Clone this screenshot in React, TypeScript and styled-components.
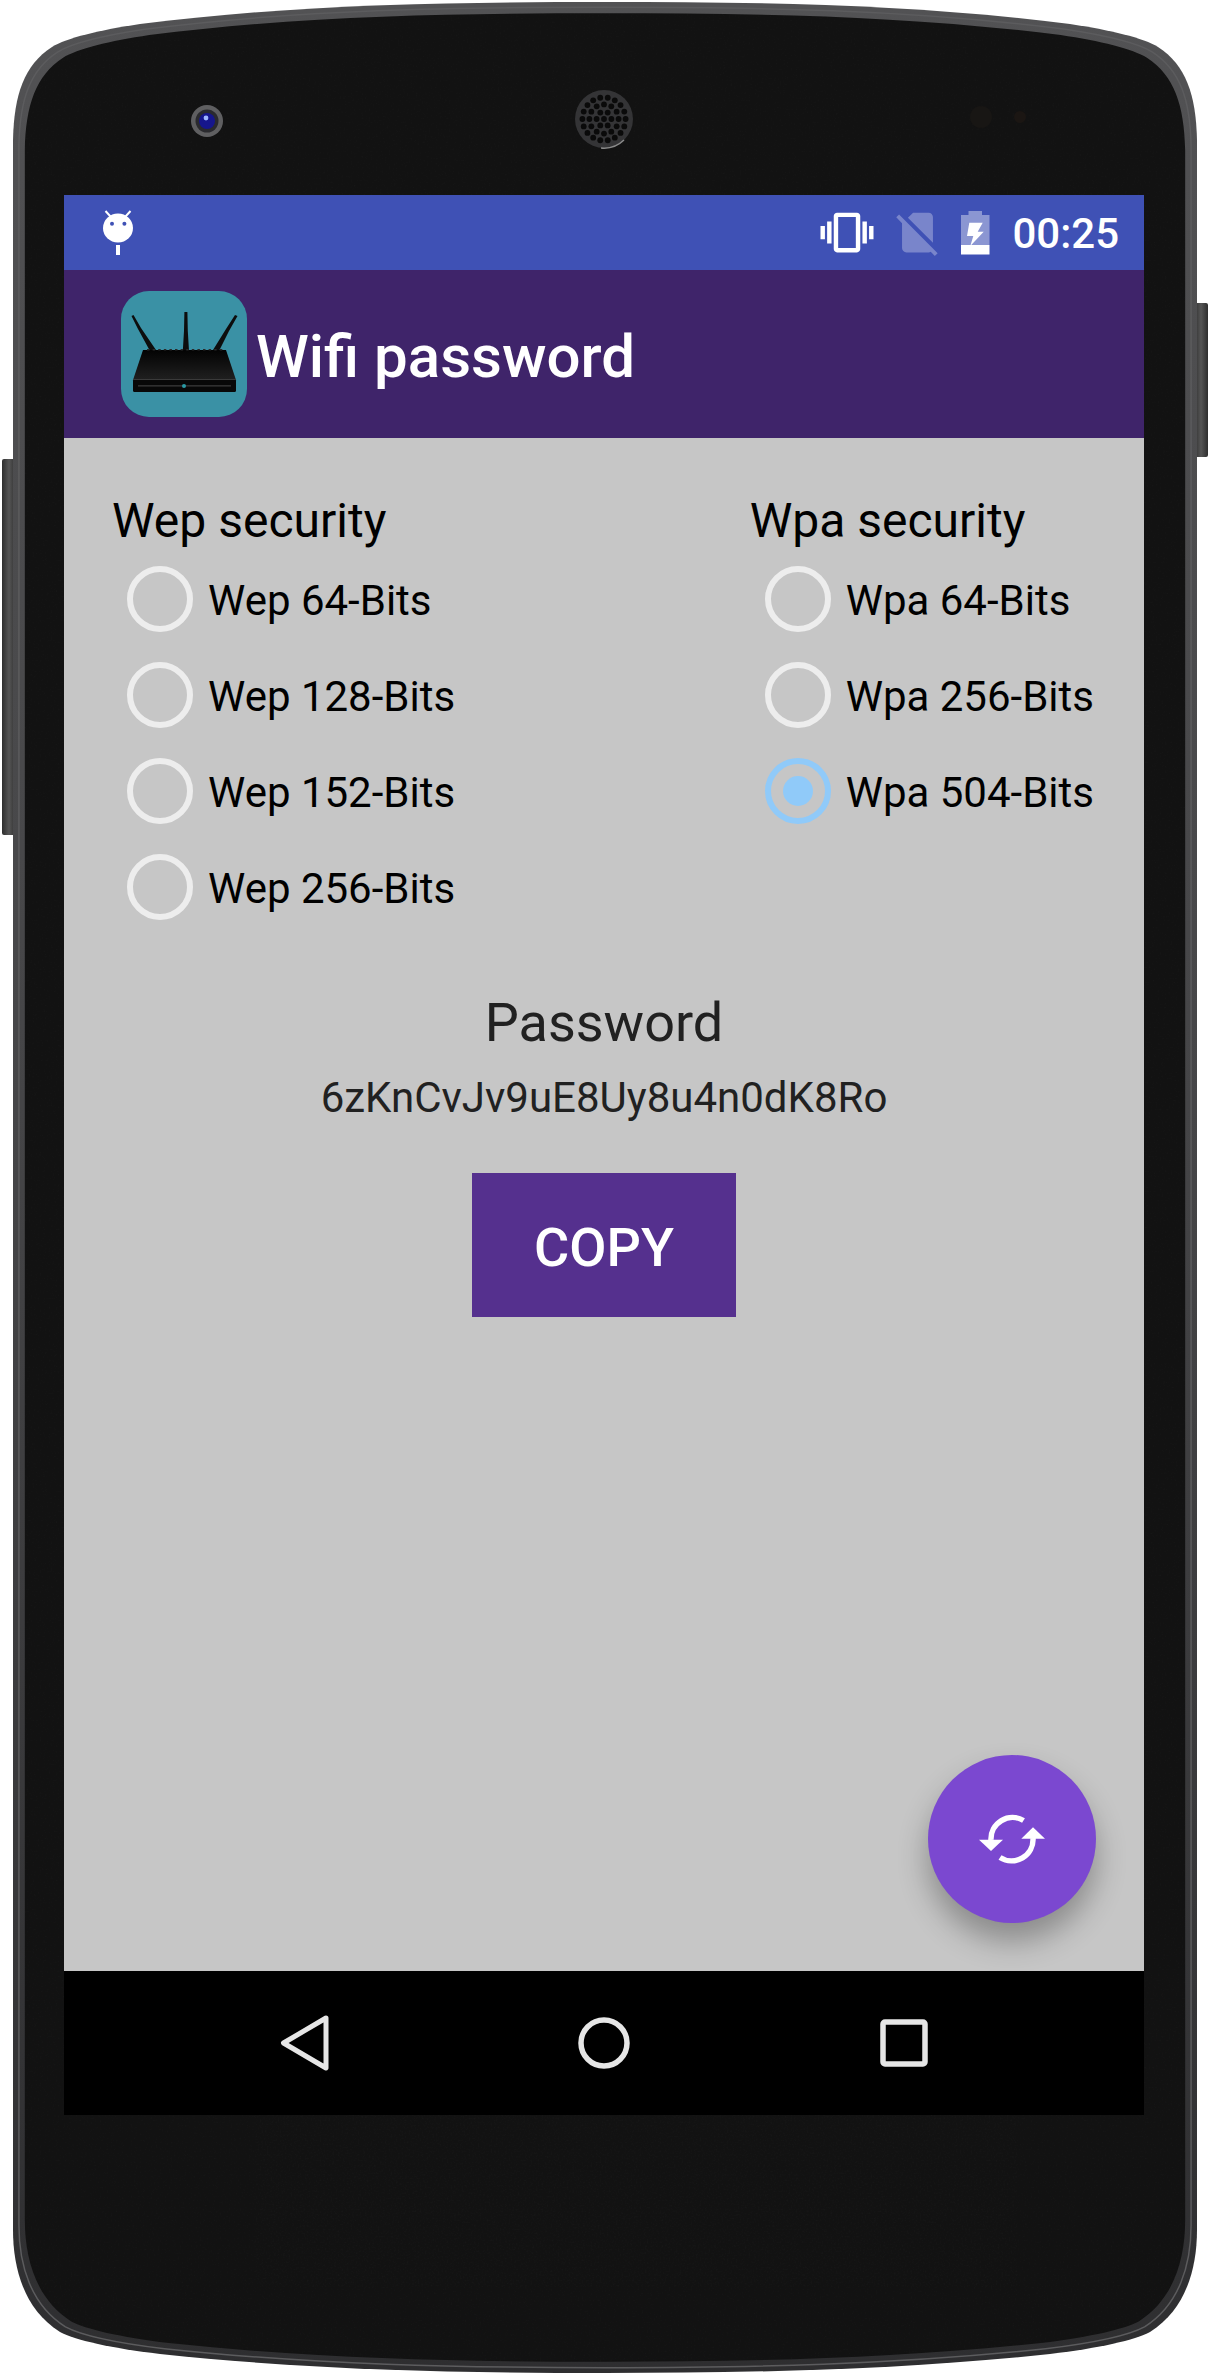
import React from "react";
import styled, { createGlobalStyle } from "styled-components";

const GlobalStyle = createGlobalStyle`
  html, body {
    margin: 0;
    padding: 0;
    background: #ffffff;
    font-family: Roboto, "Liberation Sans", sans-serif;
  }
`;

const Device = styled.div`
  position: relative;
  box-sizing: border-box;
  width: 1210px;
  height: 2375px;
  padding: 195px 66px 260px 64px;
`;

const FrameArt = styled.svg`
  position: absolute;
  top: 0;
  left: 0;
  width: 1210px;
  height: 2375px;
`;

const Screen = styled.div`
  position: relative;
  display: flex;
  flex-direction: column;
  width: 1080px;
  height: 1920px;
`;

const StatusBar = styled.div`
  display: flex;
  align-items: center;
  flex: none;
  height: 75px;
  padding: 0 25px 0 39px;
  background: #3f51b5;
  color: #ffffff;
`;

const StatusIcons = styled.div`
  display: flex;
  align-items: center;
  gap: 17px;
  margin-left: auto;
`;

const Clock = styled.span`
  margin-left: 5px;
  padding-top: 3px;
  font-size: 42px;
  font-weight: 500;
  line-height: 1;
`;

const AppBar = styled.div`
  display: flex;
  align-items: center;
  flex: none;
  height: 168px;
  padding-left: 57px;
  background: #3f246a;
`;

const AppIcon = styled.div`
  display: flex;
  width: 126px;
  height: 126px;
  border-radius: 28px;
  background: #3a91a5;
`;

const AppTitle = styled.h1`
  margin: 0 0 0 9px;
  padding-top: 6px;
  color: #ffffff;
  font-size: 60px;
  font-weight: 500;
  line-height: 1;
`;

const Content = styled.main`
  position: relative;
  flex: 1;
  padding-top: 54px;
  background: #c6c6c6;
`;

const SecurityGroups = styled.div`
  display: flex;
  justify-content: space-between;
  padding: 0 50px 0 48px;
`;

const GroupTitle = styled.div`
  height: 59px;
  color: #000000;
  font-size: 48px;
  line-height: 57px;
`;

const RadioRow = styled.div`
  display: flex;
  align-items: center;
  height: 96px;
  padding-left: 15px;
`;

const RadioRing = styled.span<{ $checked?: boolean }>`
  display: flex;
  align-items: center;
  justify-content: center;
  box-sizing: border-box;
  width: 66px;
  height: 66px;
  border: 6px solid ${(props) => (props.$checked ? "#90caf9" : "#ededed")};
  border-radius: 50%;
`;

const RadioDot = styled.span`
  width: 30px;
  height: 30px;
  border-radius: 50%;
  background: #90caf9;
`;

const RadioLabel = styled.span`
  margin-left: 15px;
  padding-top: 4px;
  color: #000000;
  font-size: 42px;
  line-height: 1;
  white-space: nowrap;
`;

const PasswordBlock = styled.div`
  display: flex;
  flex-direction: column;
  align-items: center;
  margin-top: 56px;
`;

const PasswordTitle = styled.div`
  color: #212121;
  font-size: 54px;
  line-height: 64px;
`;

const PasswordValue = styled.div`
  margin-top: 18px;
  color: #212121;
  font-size: 42px;
  line-height: 50px;
`;

const CopyButton = styled.button`
  width: 264px;
  height: 144px;
  margin-top: 50px;
  padding: 4px 0 0;
  border: 0;
  border-radius: 0;
  background: #55308e;
  color: #ffffff;
  font-family: inherit;
  font-size: 54px;
  font-weight: 500;
`;

const Fab = styled.button`
  position: absolute;
  right: 48px;
  bottom: 48px;
  display: flex;
  align-items: center;
  justify-content: center;
  width: 168px;
  height: 168px;
  padding: 0;
  border: 0;
  border-radius: 50%;
  background: #7b48d0;
  box-shadow: 0 18px 30px rgba(0, 0, 0, 0.3);
`;

const NavBar = styled.nav`
  display: flex;
  justify-content: center;
  flex: none;
  height: 144px;
  background: #000000;
`;

const NavButton = styled.div`
  display: flex;
  align-items: center;
  justify-content: center;
  width: 300px;
`;

const SpeakerHoles = () => {
  const holes: [number, number][] = [[0, 0]];
  [[7.4, 6], [14.6, 12], [21.6, 18]].forEach(([radius, count]) => {
    for (let i = 0; i < count; i++) {
      const angle = (i / count) * Math.PI * 2;
      holes.push([radius * Math.cos(angle), radius * Math.sin(angle)]);
    }
  });
  return (
    <g transform="translate(604 119)">
      <circle r="29" fill="#343436" />
      <path d="M 20 21 A 29 29 0 0 1 -3 29" fill="none" stroke="#8a8a8a" strokeWidth="1.5" />
      {holes.map(([x, y], i) => (
        <circle key={i} cx={x} cy={y} r="2.9" fill="#0a0a0a" />
      ))}
    </g>
  );
};

const BODY_PATH =
  "M13 140 C14 95 24 65 52 47 C66 38 100 30 140 24 C300 4 450 2 605 2 C760 2 910 4 1070 24 C1110 30 1144 38 1158 47 C1186 65 1196 95 1197 140 L1197 2230 C1197 2270 1185 2310 1150 2332 C1135 2340 1100 2348 1050 2354 C900 2370 750 2373 605 2373 C460 2373 310 2370 160 2354 C110 2348 75 2340 60 2332 C25 2310 13 2270 13 2230 Z";

const PhoneFrame = () => (
  <FrameArt viewBox="0 0 1210 2375" aria-hidden="true">
    <defs>
      <linearGradient id="rim" x1="0" y1="0" x2="0" y2="1">
        <stop offset="0" stopColor="#525254" />
        <stop offset="0.5" stopColor="#444446" />
        <stop offset="1" stopColor="#2e2e30" />
      </linearGradient>
      <linearGradient id="rocker" x1="0" y1="0" x2="1" y2="0">
        <stop offset="0" stopColor="#2e2e2e" />
        <stop offset="0.5" stopColor="#555555" />
        <stop offset="1" stopColor="#2e2e2e" />
      </linearGradient>
      <filter id="grain" x="0" y="0" width="100%" height="100%">
        <feTurbulence type="fractalNoise" baseFrequency="0.55" numOctaves="2" seed="4" />
        <feColorMatrix values="0 0 0 0 1  0 0 0 0 1  0 0 0 0 1  0.9 0 0 0 -0.42" />
      </filter>
      <clipPath id="inner">
        <path d={BODY_PATH} transform="translate(605 1187.5) scale(0.98 0.9905) translate(-605 -1187.5)" />
      </clipPath>
    </defs>
    <rect x="2" y="459" width="14" height="376" rx="2" fill="url(#rocker)" />
    <rect x="1194" y="303" width="14" height="154" rx="2" fill="url(#rocker)" />
    <path d={BODY_PATH} fill="url(#rim)" />
    <path
      d={BODY_PATH}
      transform="translate(605 1187.5) scale(0.99 0.9955) translate(-605 -1187.5)"
      fill="none"
      stroke="#5c5c5e"
      strokeWidth="1.5"
    />
    <path
      d={BODY_PATH}
      transform="translate(605 1187.5) scale(0.98 0.9905) translate(-605 -1187.5)"
      fill="#121212"
    />
    <g clipPath="url(#inner)">
      <rect x="0" y="0" width="1210" height="2375" filter="url(#grain)" opacity="0.05" />
    </g>

    <g transform="translate(207 121)">
      <circle r="16" fill="#5f5f61" />
      <circle r="11.5" fill="#2a2a2e" />
      <circle r="8" fill="#16168c" />
      <circle cx="-1" cy="-3" r="2.4" fill="#9fb6ff" />
    </g>
    <SpeakerHoles />
    <circle cx="981" cy="117" r="11" fill="#181614" />
    <circle cx="1020" cy="117" r="6" fill="#1b1613" />
  </FrameArt>
);

const NotificationIcon = () => (
  <svg width="30" height="45" viewBox="0 0 30 45" fill="#ffffff">
    <ellipse cx="15" cy="18" rx="15" ry="14.6" />
    <path d="M2.5 1 L7.5 6.5 M27.5 1 L22.5 6.5" stroke="#ffffff" strokeWidth="2" />
    <circle cx="9" cy="13.7" r="2" fill="#3f51b5" />
    <circle cx="21.4" cy="13.7" r="2" fill="#3f51b5" />
    <rect x="13" y="35" width="4" height="10" />
  </svg>
);

const VibrateIcon = () => (
  <svg width="54" height="53" viewBox="0 0 24 24" fill="#ffffff">
    <path d="M0 15h2V9H0v6zm3 2h2V7H3v10zm19-8v6h2V9h-2zm-3 8h2V7h-2v10zM16.5 3h-9C6.67 3 6 3.67 6 4.5v15c0 .83.67 1.5 1.5 1.5h9c.83 0 1.5-.67 1.5-1.5v-15c0-.83-.67-1.5-1.5-1.5zM16 19H8V5h8v14z" />
  </svg>
);

const NoSimIcon = () => (
  <svg width="53" height="53" viewBox="0 0 24 24" fill="#ffffff" fillOpacity="0.3">
    <path d="M18.99 5c0-1.1-.89-2-1.99-2h-7L7.66 5.34 19 16.68 18.99 5zM3.65 3.88L2.38 5.15 5 7.77V19c0 1.1.9 2 2 2h10.01c.35 0 .67-.1.96-.26l1.88 1.88 1.27-1.27L3.65 3.88z" />
  </svg>
);

const BatteryIcon = () => (
  <svg width="29" height="44" viewBox="0 0 29 44" fill="#ffffff">
    <path d="M7.5 0 H21 V4 H28.5 V34 H0 V4 H7.5 Z" fillOpacity="0.4" />
    <rect x="0" y="34" width="28.5" height="9.5" />
    <polygon points="8.3,11.7 21.7,11.7 16.7,20.7 22.7,20.7 9.3,35 12.3,25 6,25" />
  </svg>
);

const RouterIcon = () => (
  <svg width="126" height="126" viewBox="0 0 126 126">
    <defs>
      <linearGradient id="routerTop" x1="0" y1="0" x2="0" y2="1">
        <stop offset="0" stopColor="#030303" />
        <stop offset="1" stopColor="#202020" />
      </linearGradient>
    </defs>
    <polygon points="10.5,25 12.5,24 20,37 35,59 29,60 17,38" fill="#0d0d0d" />
    <polygon points="63.4,21 66.4,21 66.8,40 68,60 61.8,60 63,40" fill="#0d0d0d" />
    <polygon points="114,24 116.5,25 108,40 98,60 92,59 105,38" fill="#0d0d0d" />
    <polygon points="22,59 105,59 115,89 12,89" fill="url(#routerTop)" />
    {[...Array(14)].map((_, i) => (
      <rect key={i} x={26 + i * 5.6} y="58" width="2.5" height="1.5" fill="#2a2a2a" />
    ))}
    <rect x="12" y="88" width="103" height="13" rx="1.5" fill="#080808" />
    <rect x="12" y="88" width="103" height="1" fill="#3a3a3a" />
    <rect x="17" y="94.4" width="93" height="1" fill="#4a4a4a" />
    <circle cx="63" cy="95" r="2" fill="#2a9aa5" />
  </svg>
);

const SyncIcon = () => (
  <svg width="66" height="50" viewBox="-33 -25 66 50" fill="#ffffff">
    <path d="M11.5 -18.5 A21.5 21.5 0 0 0 -21 1 M-12 18.5 A21.5 21.5 0 0 0 21 -1" fill="none" stroke="#ffffff" strokeWidth="5.5" />
    <polygon points="-33,0.7 -9,0.7 -21,12" />
    <polygon points="9.3,-0.3 33,-0.3 21,-11.7" />
  </svg>
);

const NavBackIcon = () => (
  <svg width="49" height="56" viewBox="0 0 49 56" fill="none" stroke="#e6e6e6" strokeWidth="5" strokeLinejoin="round">
    <path d="M46 3 L3.5 28 L46 53 Z" />
  </svg>
);

const NavHomeIcon = () => (
  <svg width="52" height="52" viewBox="0 0 52 52" fill="none" stroke="#e6e6e6" strokeWidth="5.5">
    <circle cx="26" cy="26" r="23" />
  </svg>
);

const NavRecentsIcon = () => (
  <svg width="48" height="48" viewBox="0 0 48 48" fill="none" stroke="#e6e6e6" strokeWidth="5.5" strokeLinejoin="round">
    <rect x="3" y="3" width="42" height="42" rx="2" />
  </svg>
);

const Radio = ({ label, checked }: { label: string; checked?: boolean }) => (
  <RadioRow>
    <RadioRing $checked={checked}>{checked && <RadioDot />}</RadioRing>
    <RadioLabel>{label}</RadioLabel>
  </RadioRow>
);

const wepOptions = ["Wep 64-Bits", "Wep 128-Bits", "Wep 152-Bits", "Wep 256-Bits"];
const wpaOptions = ["Wpa 64-Bits", "Wpa 256-Bits", "Wpa 504-Bits"];

const App = () => (
  <Device>
    <GlobalStyle />
    <PhoneFrame />
    <Screen>
      <StatusBar>
        <NotificationIcon />
        <StatusIcons>
          <VibrateIcon />
          <NoSimIcon />
          <BatteryIcon />
          <Clock>00:25</Clock>
        </StatusIcons>
      </StatusBar>
      <AppBar>
        <AppIcon>
          <RouterIcon />
        </AppIcon>
        <AppTitle>Wifi password</AppTitle>
      </AppBar>
      <Content>
        <SecurityGroups>
          <div>
            <GroupTitle>Wep security</GroupTitle>
            {wepOptions.map((option) => (
              <Radio key={option} label={option} />
            ))}
          </div>
          <div>
            <GroupTitle>Wpa security</GroupTitle>
            {wpaOptions.map((option) => (
              <Radio key={option} label={option} checked={option === "Wpa 504-Bits"} />
            ))}
          </div>
        </SecurityGroups>
        <PasswordBlock>
          <PasswordTitle>Password</PasswordTitle>
          <PasswordValue>6zKnCvJv9uE8Uy8u4n0dK8Ro</PasswordValue>
          <CopyButton>COPY</CopyButton>
        </PasswordBlock>
        <Fab>
          <SyncIcon />
        </Fab>
      </Content>
      <NavBar>
        <NavButton>
          <NavBackIcon />
        </NavButton>
        <NavButton>
          <NavHomeIcon />
        </NavButton>
        <NavButton>
          <NavRecentsIcon />
        </NavButton>
      </NavBar>
    </Screen>
  </Device>
);

export default App;
